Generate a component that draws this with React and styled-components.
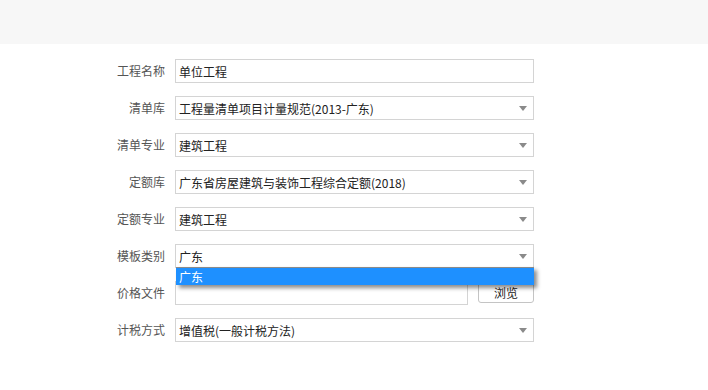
import React from "react";
import styled, { createGlobalStyle } from "styled-components";

const GlobalStyle = createGlobalStyle`
  html, body {
    margin: 0;
    padding: 0;
    background: #ffffff;
    font-family: "Noto Sans CJK SC", "Noto Sans", sans-serif;
  }
`;

const fields = [
  { label: "工程名称", value: "单位工程", type: "text" },
  { label: "清单库", value: "工程量清单项目计量规范(2013-广东)", type: "select" },
  { label: "清单专业", value: "建筑工程", type: "select" },
  { label: "定额库", value: "广东省房屋建筑与装饰工程综合定额(2018)", type: "select" },
  { label: "定额专业", value: "建筑工程", type: "select" },
  { label: "模板类别", value: "广东", type: "select", open: ["广东"] },
  { label: "价格文件", value: "", type: "file" },
  { label: "计税方式", value: "增值税(一般计税方法)", type: "select" }
];

export default function App() {
  return (
    <Page>
      <GlobalStyle />
      <Header />
      <Form>
        {fields.map(field => (
          <Row key={field.label}>
            <Label>{field.label}</Label>
            {renderControl(field)}
          </Row>
        ))}
      </Form>
    </Page>
  );
}

function renderControl(field) {
  if (field.type === "file") {
    return (
      <FileGroup>
        <Box width={293} />
        <BrowseButton>浏览</BrowseButton>
      </FileGroup>
    );
  }
  if (field.type === "select") {
    return (
      <SelectWrap>
        <Box width={359}>
          <Value>{field.value}</Value>
          <Arrow />
        </Box>
        {field.open && (
          <Options>
            {field.open.map(opt => (
              <Option key={opt}>{opt}</Option>
            ))}
          </Options>
        )}
      </SelectWrap>
    );
  }
  return (
    <Box width={359}>
      <Value>{field.value}</Value>
    </Box>
  );
}

const Page = styled.div`
  width: 708px;
  height: 390px;
  background: #fff;
`;

const Header = styled.div`
  height: 44px;
  background: #f7f7f7;
`;

const Form = styled.div`
  display: flex;
  flex-direction: column;
  gap: 13px;
  padding-top: 15px;
`;

const Row = styled.div`
  display: flex;
  align-items: flex-start;
  gap: 10px;
  height: 24px;
`;

const Label = styled.div`
  width: 165px;
  text-align: right;
  font-size: 12px;
  line-height: 24px;
  color: #555;
`;

const SelectWrap = styled.div`
  position: relative;
`;

const Box = styled.div`
  box-sizing: border-box;
  width: ${p => p.width}px;
  height: 24px;
  border: 1px solid #d4d4d4;
  background: #fff;
  display: flex;
  align-items: center;
  padding: 0 6px 0 3px;
`;

const Value = styled.span`
  flex: 1;
  font-size: 12px;
  color: #222;
  white-space: nowrap;
`;

const Arrow = styled.span`
  width: 0;
  height: 0;
  border-left: 4px solid transparent;
  border-right: 4px solid transparent;
  border-top: 5px solid #8a8a8a;
  margin-top: 1px;
`;

const Options = styled.div`
  position: absolute;
  left: 1px;
  top: 23px;
  width: 358px;
  box-sizing: border-box;
  border-top: 1px solid #8a8a8a;
  background: #1e90ff;
  box-shadow: 3px 3px 4px rgba(0, 0, 0, 0.45);
  z-index: 2;
`;

const Option = styled.div`
  height: 17px;
  line-height: 17px;
  padding-left: 3px;
  font-size: 12px;
  color: #fff;
`;

const FileGroup = styled.div`
  display: flex;
  gap: 10px;
  align-items: flex-start;
`;

const BrowseButton = styled.button`
  box-sizing: border-box;
  width: 56px;
  height: 22px;
  border: 1px solid #c4c4c4;
  border-radius: 3px;
  background: #fff;
  font-family: inherit;
  font-size: 12px;
  color: #222;
  padding: 0;
`;
